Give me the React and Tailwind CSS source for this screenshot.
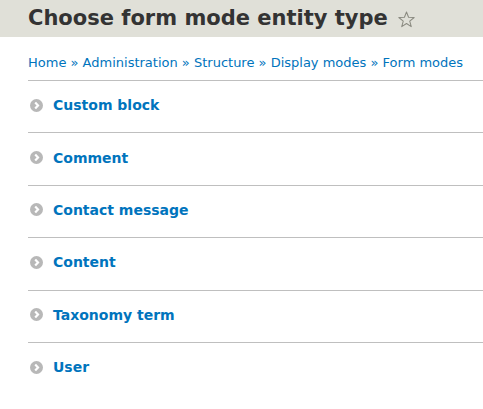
import React from "react";

const items = ["Custom block", "Comment", "Contact message", "Content", "Taxonomy term", "User"];

function Arrow() {
  return (
    <svg width="13" height="13" viewBox="0 0 13 13" className="shrink-0">
      <circle cx="6.5" cy="6.5" r="6.5" fill="#b8b8b8" />
      <path d="M5.2 3.5 L8 6.5 L5.2 9.5" fill="none" stroke="#fff" strokeWidth="2.2" />
    </svg>
  );
}

function Star() {
  return (
    <svg width="19" height="19" viewBox="0 0 24 24" className="ml-[9px] mt-[1px]">
      <path
        d="M12 2.5 L14.6 9.2 L21.7 9.5 L16.1 14 L18 21 L12 17 L6 21 L7.9 14 L2.3 9.5 L9.4 9.2 Z"
        fill="none"
        stroke="#8a8a80"
        strokeWidth="1.3"
        strokeLinejoin="round"
      />
    </svg>
  );
}

export default function App() {
  return (
    <div className="w-[483px] h-[409px] bg-white overflow-hidden" style={{ fontFamily: '"DejaVu Sans", sans-serif' }}>
      <div className="bg-[#e0e0d8] h-[37px] pl-[28px] flex items-center">
        <h1 className="text-[21px] font-bold text-[#333] leading-none flex items-center">
          Choose form mode entity type
          <Star />
        </h1>
      </div>
      <div className="pl-[28px]">
        <div className="pt-[18px] pb-[9px] text-[13px] leading-[16px] text-[#0074bd]">
          Home » Administration » Structure » Display modes » Form modes
        </div>
        <ul>
          {items.map((t) => (
            <li key={t} className="border-t border-[#bfbfbf] h-[52.4px] flex items-center pl-[2px] pb-[3px]">
              <Arrow />
              <span className="ml-[10px] text-[14px] font-bold text-[#0074bd] leading-none">{t}</span>
            </li>
          ))}
        </ul>
      </div>
    </div>
  );
}
